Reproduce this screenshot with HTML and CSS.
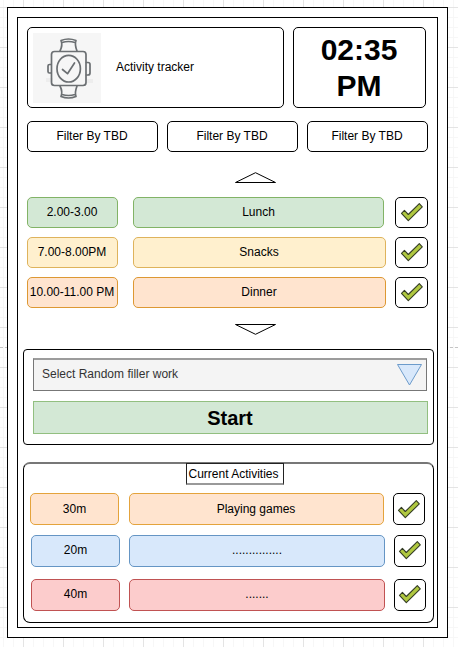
FILE: index.html
```html
<!DOCTYPE html>
<html lang="en">
<head>
<meta charset="utf-8">
<title>Activity tracker</title>
<link rel="stylesheet" href="styles.css">
</head>
<body>
<svg class="defs" width="0" height="0" aria-hidden="true">
  <symbol id="check" viewBox="0 0 24 20">
    <path d="M1.500 11.300 4.400 8.400 8.300 12.500 19.300 1.700 22.300 4.800 8.300 18.700Z" fill="#b0c840" stroke="#333c24" stroke-width="1.1" stroke-linejoin="round"/>
  </symbol>
</svg>
<div class="page-break"></div>
<main class="frame">
  <div class="screen">
    <header class="header">
      <div class="box brand">
        <svg class="watch" viewBox="0 0 68 70" width="68" height="70">
          <rect width="68" height="70" fill="#f6f6f6"/>
          <path d="M13 47h7M54 48h6" stroke="#ededed" stroke-width="4" fill="none"/>
          <g fill="none" stroke="#6b6f72" stroke-width="1.7" stroke-linejoin="round" stroke-linecap="round">
            <rect x="18.500" y="18.500" width="34.500" height="34" rx="3"/>
            <ellipse cx="35.700" cy="35.700" rx="11.700" ry="13.300"/>
            <path d="M29.500 36.500 34.500 40.700 41.500 30"/>
            <path d="M27 18C29 14 29.500 11 28 7.500Q35.500 4.500 43 7.500C41.500 11 42.500 14 44 18M29 9.500Q35.500 7.500 42 9.500"/>
            <path d="M27 53C29 57 29.500 60 28 63.500Q35.500 66.500 43 63.500C41.500 60 42.500 57 44 53M29 61.500Q35.500 63.500 42 61.500"/>
            <path d="M18 31.500H16.500Q15 31.500 15 33V38.500Q15 40 16.500 40H18M53.500 29.500H55Q57 29.500 57 31.500V40Q57 42 55 42H53.500"/>
          </g>
        </svg>
        <span>Activity tracker</span>
      </div>
      <div class="box clock">02:35 PM</div>
    </header>
    <nav class="filters">
      <div class="box">Filter By TBD</div>
      <div class="box">Filter By TBD</div>
      <div class="box">Filter By TBD</div>
    </nav>
    <svg class="arrow up" viewBox="0 0 43 12" width="43" height="12"><path d="M1.500 10.500 21.500 .7 41.500 10.500Z"/></svg>
    <section class="schedule">
      <div class="box green">2.00-3.00</div><div class="box green short">Lunch</div><div class="box tick"><svg><use href="#check"/></svg></div>
      <div class="box yellow">7.00-8.00PM</div><div class="box yellow">Snacks</div><div class="box tick"><svg><use href="#check"/></svg></div>
      <div class="box orange">10.00-11.00 PM</div><div class="box orange">Dinner</div><div class="box tick"><svg><use href="#check"/></svg></div>
    </section>
    <svg class="arrow down" viewBox="0 0 43 12" width="43" height="12"><path d="M1.500 .5 21.500 10.300 41.500 .5Z"/></svg>
    <section class="picker">
      <div class="select"><span>Select Random filler work</span>
        <svg viewBox="0 0 26 23" width="26" height="23"><path d="M1.500 1.500H25.500L13.500 22Z" fill="#d8e8fb" stroke="#6c9bcb"/></svg>
      </div>
      <div class="start">Start</div>
    </section>
    <section class="activities">
      <h2 class="title">Current Activities</h2>
      <div class="activity first"><div class="box amber">30m</div><div class="box amber">Playing games</div><div class="box tick"><svg><use href="#check"/></svg></div></div>
      <div class="activity"><div class="box blue">20m</div><div class="box blue">...............</div><div class="box tick"><svg><use href="#check"/></svg></div></div>
      <div class="activity last"><div class="box red">40m</div><div class="box red">.......</div><div class="box tick"><svg><use href="#check"/></svg></div></div>
    </section>
  </div>
</main>
</body>
</html>
```
FILE: styles.css
```css
* { box-sizing: border-box; }
html { height: 100%; overflow: hidden; }
body {
  margin: 0;
  height: 647px;
  padding: 7px;
  font: 12px/14px "Liberation Sans", Arial, sans-serif;
  color: #000;
  background-color: #fff;
  background-image:
    linear-gradient(90deg, #e4e4e4 1px, transparent 1px),
    linear-gradient(#e4e4e4 1px, transparent 1px),
    linear-gradient(90deg, #f7f7f7 1px, transparent 1px),
    linear-gradient(#f7f7f7 1px, transparent 1px);
  background-size: 40px 40px, 40px 40px, 10px 10px, 10px 10px;
  background-position: 23px 7px, 23px 7px, 3px 7px, 3px 7px;
}
.defs { position: absolute; }
.page-break {
  position: absolute;
  left: 0;
  right: 0;
  top: 347px;
  border-top: 1px dashed #c4c4c4;
}
.frame {
  position: relative;
  width: 441px;
  height: 631px;
  padding: 9px;
  border: 1px solid #000;
  background: #fff;
}
.screen {
  width: 421px;
  height: 611px;
  padding: 9px 0 0 5px;
  border: 1px solid #000;
}
.box {
  display: flex;
  align-items: center;
  justify-content: center;
  border: 1px solid #000;
  border-radius: 5px;
  background: #fff;
  white-space: nowrap;
}
.header {
  display: grid;
  grid-template-columns: 257px 133px;
  gap: 9px;
  height: 81px;
  margin-left: 4px;
}
.brand { justify-content: flex-start; padding-left: 5px; }
.brand span { margin-bottom: 2px; }
.watch { margin-right: 15px; }
.clock {
  padding: 0 20px 0 19px;
  font-size: 30px;
  font-weight: bold;
  line-height: 36px;
  text-align: center;
  white-space: normal;
}
.filters {
  display: grid;
  grid-template-columns: 131px 131px 121px;
  gap: 9px;
  height: 31px;
  margin: 13px 0 0 4px;
}
.filters .box { padding: 0 1px 1px 0; }
.arrow {
  display: block;
  margin-left: 211px;
  fill: #fff;
  stroke: #000;
}
.up { margin-top: 20px; }
.schedule {
  display: grid;
  grid-template-columns: 91px 253px 33px;
  grid-auto-rows: 31px;
  column-gap: 15px;
  row-gap: 9px;
  margin: 13px 0 0 4px;
}
.schedule > :nth-child(3n) { margin-left: -6px; width: 33px; }
.schedule .box { padding: 0 1px 1px 0; }
.schedule .box.short { width: 251px; padding-right: 0; }
.schedule .box.tick { padding: 0 0 2px; }
.green { background: #d3e8d5; border-color: #82b366; }
.yellow { background: #fff0ce; border-color: #deb35c; }
.orange { background: #ffe4cf; border-color: #dd9833; }
.amber { background: #ffe4cf; border-color: #e4a33c; }
.blue { background: #d8e8fb; border-color: #6595c4; }
.red { background: #fccccc; border-color: #c05252; }
.tick svg { width: 24px; height: 20px; }
.down { margin-top: 16px; }
.picker {
  width: 411px;
  height: 96px;
  margin-top: 13px;
  padding: 8px 0 0 9px;
  border: 1px solid #000;
  border-radius: 4px;
}
.select {
  display: flex;
  align-items: center;
  justify-content: space-between;
  width: 394px;
  height: 33px;
  padding: 0 4px 1px 8px;
  border: 1px solid #777;
  border-top: 2px solid #9c9c9c;
  background: #f4f4f4;
  color: #333;
}
.select span { margin-bottom: 2px; }
.start {
  width: 395px;
  height: 33px;
  margin-top: 10px;
  padding-right: 1px;
  border: 1px solid #92bf80;
  background: #d3e8d5;
  font-size: 20px;
  font-weight: bold;
  line-height: 33px;
  text-align: center;
}
.activities {
  width: 411px;
  height: 161px;
  margin-top: 17px;
  border: 1px solid #000;
  border-top: 2px solid #777;
  border-radius: 7px;
}
.title {
  width: 98px;
  height: 22px;
  margin: -1px 0 0 162px;
  padding-right: 2px;
  border: 1px solid #222;
  border-bottom: 2px solid #999;
  font: inherit;
  line-height: 20px;
  text-indent: -1px;
  text-align: center;
  white-space: nowrap;
}
.activity {
  display: grid;
  grid-template-columns: 89px 256px 32px;
  gap: 9px;
  height: 32px;
  margin: 10px 0 0 7px;
}
.activity .box { padding: 0 0 2px; }
.activity .tick { padding: 0 1px 2px 0; }
.activity.first {
  margin: 8px 0 0 6px;
}
.activity.first .box { padding-bottom: 1px; }
.activity.first > :nth-child(2) { margin-left: 1px; padding-right: 1px; }
.activity.last { margin-top: 12px; }
```
